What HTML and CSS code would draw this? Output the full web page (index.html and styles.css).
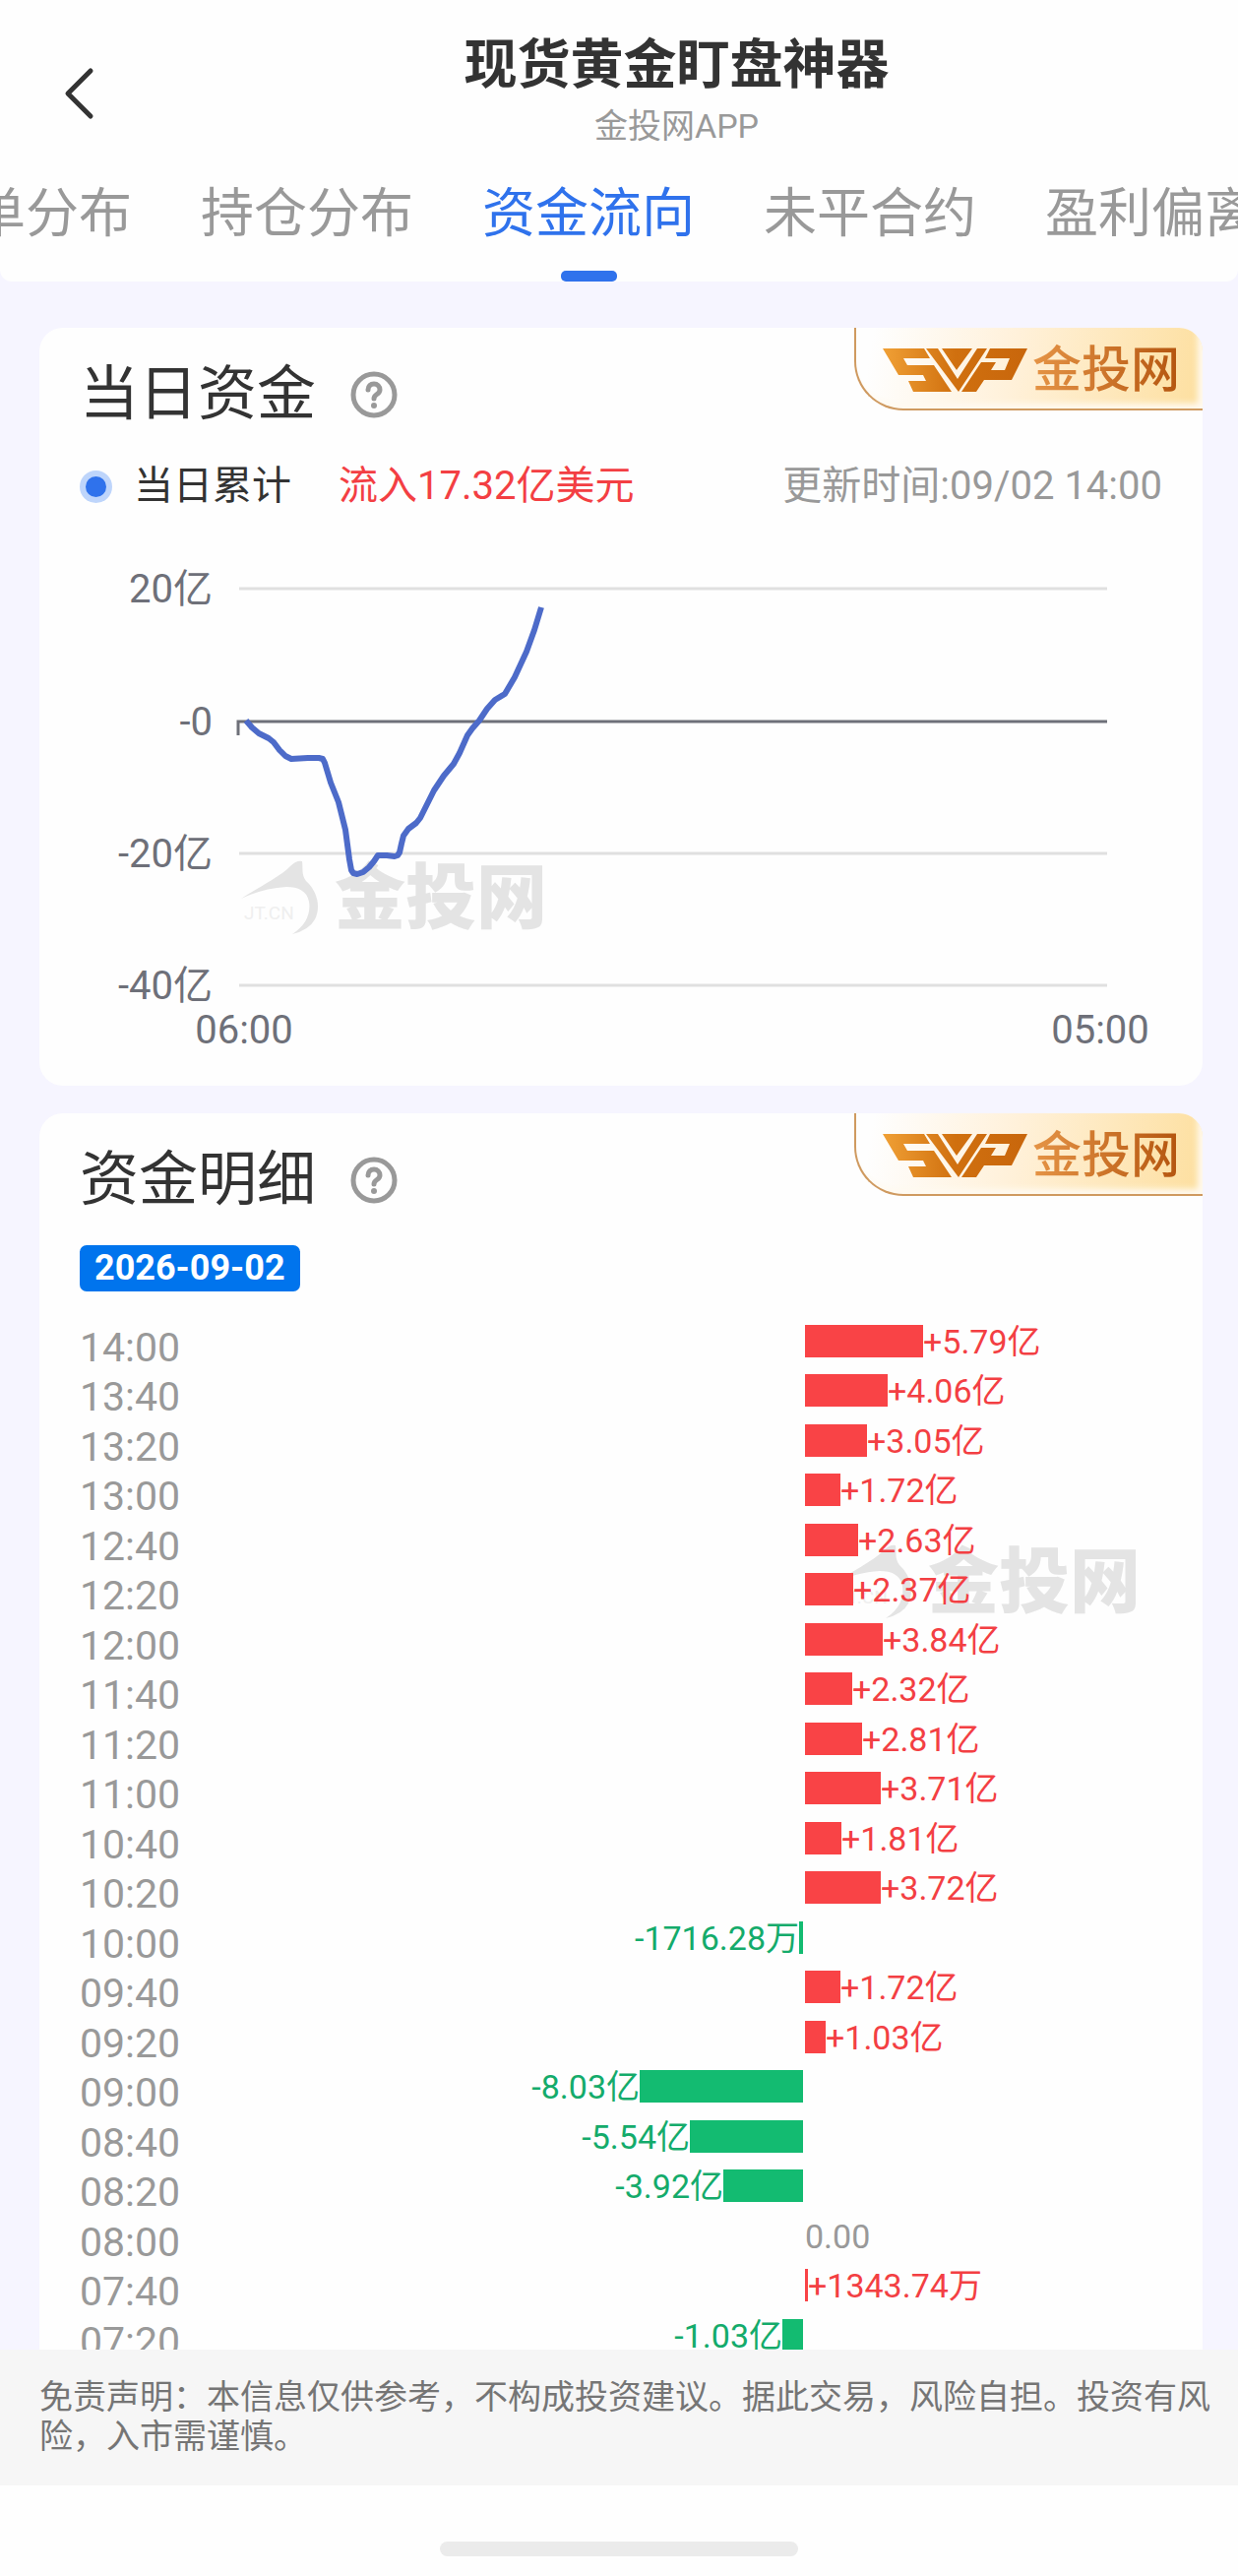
FILE: index.html
```
<!DOCTYPE html>
<html lang="zh-CN">
<head>
    <meta charset="UTF-8">
    <meta name="viewport" content="width=device-width, initial-scale=1">
    <title>现货黄金盯盘神器</title>
    <link rel="stylesheet" href="styles.css">
</head>
<body>
    <!-- Shared symbols -->
    <svg class="symbols" aria-hidden="true">
        <defs>
            <linearGradient id="goldLogo" x1="0" y1="0" x2="1" y2="0">
                <stop offset="0" stop-color="#f0a035"/>
                <stop offset="0.5" stop-color="#d0700f"/>
                <stop offset="1" stop-color="#c8660c"/>
            </linearGradient>
        </defs>
        <symbol id="help" viewBox="0 0 48 48">
            <circle cx="24" cy="24" r="21" fill="none" stroke="#999" stroke-width="5"/>
            <path d="M18 19c0-4 2.500-6 6-6s6 2.500 6 6c0 5-6 4-6 9" fill="none" stroke="#999" stroke-width="5" stroke-linecap="round"/>
            <circle cx="24" cy="35" r="3" fill="#999"/>
        </symbol>
        <symbol id="svp" viewBox="0 0 147 44">
            <path fill="url(#goldLogo)" d="M0 0H42L48 10H21L25 17H52L70 44H31L26 33H44L41 27H16ZM44 0H56L76 31L96 0H106L77 44ZM60 0H91L75 22ZM109 0H147L131 32H103L95 44H80L100 14H115L110 22H124L129 10H104Z"/>
        </symbol>
        <symbol id="watermark" viewBox="0 0 308 76">
            <path fill="#e4e4e4" d="M0 39C16 28 38 18 50 6Q56 0 62 1C63 8 61 14 66 21C78 32 81 48 75 60Q69 71 52 75C66 66 71 54 69 42C67 31 58 27 46 27C30 28 14 32 0 39Z"/>
            <text class="mark-small" x="3" y="60">JT.CN</text>
            <text class="mark-name" x="95" y="63">金投网</text>
        </symbol>
    </svg>

    <header class="top">
        <div class="title-bar">
            <button class="back" type="button" aria-label="返回">
                <svg width="32" height="54" viewBox="0 0 32 54"><path d="M28 4L5 27L28 50" fill="none" stroke="#333" stroke-width="5" stroke-linecap="round" stroke-linejoin="round"/></svg>
            </button>
            <div class="titles">
                <h1>现货黄金盯盘神器</h1>
                <p>金投网APP</p>
            </div>
        </div>
        <nav class="tabs">
            <a href="#orders">挂单分布</a>
            <a href="#positions">持仓分布</a>
            <a href="#flow" class="active">资金流向</a>
            <a href="#open">未平合约</a>
            <a href="#profit">盈利偏离</a>
        </nav>
    </header>

    <main class="content">
        <section class="card">
            <div class="brand">
                <svg class="brand-logo"><use href="#svp"/></svg>
                <span>金投网</span>
            </div>
            <div class="card-head">
                <h2>当日资金</h2>
                <button class="help" type="button" aria-label="说明"><svg><use href="#help"/></svg></button>
            </div>
            <div class="summary">
                <i class="dot"></i>
                <span class="summary-name">当日累计</span>
                <span class="summary-value">流入17.32亿美元</span>
                <time class="updated">更新时间:09/02 14:00</time>
            </div>
            <svg class="chart" viewBox="0 0 1182 543">
                <use href="#watermark" x="205" y="314" width="308" height="76"/>
                <g class="grid">
                    <path d="M203 38H1085M203 307H1085M203 441H1085"/>
                </g>
                <path class="axis" d="M202 187V173H1085"/>
                <g class="y-labels">
                    <text x="176" y="52">20亿</text>
                    <text x="176" y="187">-0</text>
                    <text x="176" y="321">-20亿</text>
                    <text x="176" y="455">-40亿</text>
                </g>
                <g class="x-labels">
                    <text x="208" y="500">06:00</text>
                    <text x="1078" y="500">05:00</text>
                </g>
                <polyline class="line" points="210,172 216,179 223,185 233,190 238,194 244,202 250,208 256,211 273,210 284,210 288,211 290,215 296,235 304,255 311,283 315,313 317,324 319,327 323,328 329,326 335,321 340,315 344,309 353,309 361,310 364,309 366,306 368,297 370,289 375,282 383,276 387,271 391,263 401,243 411,228 421,216 427,205 435,187 440,180 447,172 455,160 463,151 473,145 483,128 495,102 503,80 510,57"/>
            </svg>
        </section>

        <section class="card">
            <div class="brand">
                <svg class="brand-logo"><use href="#svp"/></svg>
                <span>金投网</span>
            </div>
            <div class="card-head">
                <h2>资金明细</h2>
                <button class="help" type="button" aria-label="说明"><svg><use href="#help"/></svg></button>
            </div>
            <time class="date">2026-09-02</time>
            <svg class="watermark"><use href="#watermark"/></svg>
            <ul class="flows" id="flows"></ul>
        </section>
    </main>

    <footer class="disclaimer">
        <p>免责声明：本信息仅供参考，不构成投资建议。据此交易，风险自担。投资有风险，入市需谨慎。</p>
    </footer>
    <div class="home"><i></i></div>

    <script>
        // [time, amount in 亿, label]
        const flows = [
            ['14:00', 5.79, '+5.79亿'],
            ['13:40', 4.06, '+4.06亿'],
            ['13:20', 3.05, '+3.05亿'],
            ['13:00', 1.72, '+1.72亿'],
            ['12:40', 2.63, '+2.63亿'],
            ['12:20', 2.37, '+2.37亿'],
            ['12:00', 3.84, '+3.84亿'],
            ['11:40', 2.32, '+2.32亿'],
            ['11:20', 2.81, '+2.81亿'],
            ['11:00', 3.71, '+3.71亿'],
            ['10:40', 1.81, '+1.81亿'],
            ['10:20', 3.72, '+3.72亿'],
            ['10:00', -0.171628, '-1716.28万'],
            ['09:40', 1.72, '+1.72亿'],
            ['09:20', 1.03, '+1.03亿'],
            ['09:00', -8.03, '-8.03亿'],
            ['08:40', -5.54, '-5.54亿'],
            ['08:20', -3.92, '-3.92亿'],
            ['08:00', 0, '0.00'],
            ['07:40', 0.134374, '+1343.74万'],
            ['07:20', -1.03, '-1.03亿']
        ];
        const pxPerYi = 20.7;

        document.getElementById('flows').innerHTML = flows.map(([time, amount, label]) => {
            const side = amount > 0 ? 'in' : amount < 0 ? 'out' : 'none';
            const width = Math.round(Math.abs(amount) * pxPerYi);
            return `
                <li>
                    <time>${time}</time>
                    <div class="flow ${side}">
                        <i class="bar" style="width: ${width}px"></i>
                        <span>${label}</span>
                    </div>
                </li>
            `;
        }).join('');
    </script>
</body>
</html>
```
FILE: styles.css
```
/* Basic Reset & Body */
* {
    box-sizing: border-box;
    margin: 0;
    padding: 0;
}

body {
    display: flex;
    flex-direction: column;
    height: 100vh;
    overflow: hidden;
    background: #f6f5ff;
    color: #333;
    font-family: Roboto, "Noto Sans CJK SC", sans-serif;
}

button {
    border: none;
    background: none;
    cursor: pointer;
}

a {
    color: inherit;
    text-decoration: none;
}

svg {
    display: block;
}

.symbols {
    position: absolute;
    width: 0;
    height: 0;
}

/* Header */
.top {
    flex: none;
    background: #fefefe;
    border-radius: 0 0 12px 12px;
    overflow: hidden;
}

.title-bar {
    display: flex;
    padding-top: 37px;
}

.back {
    width: 117px;
    height: 116px;
    padding-left: 64px;
}

.titles {
    flex: 1;
    text-align: center;
}

.titles h1 {
    font-size: 54px;
    line-height: 60px;
    font-weight: 700;
}

.titles p {
    margin-top: 11px;
    font-size: 34px;
    line-height: 40px;
    color: #999;
}

/* Tabs */
.tabs {
    display: flex;
    gap: 70px;
    margin-left: -82px;
    padding-top: 31px;
}

.tabs a {
    flex: none;
    display: flex;
    flex-direction: column;
    align-items: center;
    height: 102px;
    font-size: 54px;
    line-height: 68px;
    color: #999;
}

.tabs .active {
    color: #2f72ec;
}

.tabs .active::after {
    content: "";
    width: 57px;
    height: 11px;
    margin-top: auto;
    border-radius: 5px;
    background: #2f72ec;
}

/* Cards */
.content {
    flex: 1;
    min-height: 0;
    overflow: hidden;
    padding: 47px 36px 0 40px;
}

.card {
    position: relative;
    margin-bottom: 28px;
    background: #fefefe;
    border-radius: 24px;
    overflow: hidden;
}

.card:last-child {
    padding-bottom: 40px;
}

.card-head {
    display: flex;
    align-items: center;
    gap: 35px;
    padding: 32px 41px 0;
}

.card-head h2 {
    font-size: 60px;
    line-height: 72px;
    font-weight: 400;
}

.help svg {
    width: 48px;
    height: 48px;
}

/* Corner brand */
.brand {
    position: absolute;
    top: 0;
    right: 0;
    display: flex;
    align-items: center;
    gap: 5px;
    width: 354px;
    height: 84px;
    padding: 4px 0 0 27px;
    border-left: 2px solid #cf9a60;
    border-bottom: 2px solid #cf9a60;
    border-bottom-left-radius: 50px;
    background: linear-gradient(100deg, #fefefe 5%, #fff1da 45%, #fddf9f 100%);
    box-shadow: inset -5px -5px 6px #fffaf0;
}

.brand-logo {
    width: 147px;
    height: 44px;
}

.brand span {
    font-size: 50px;
    line-height: 60px;
    font-weight: 500;
    color: transparent;
    background: linear-gradient(90deg, #e59446, #b4550f);
    background-clip: text;
}

/* Daily summary */
.summary {
    display: flex;
    align-items: center;
    margin-top: 33px;
    padding: 0 41px;
    font-size: 40px;
    line-height: 48px;
}

.dot {
    width: 33px;
    height: 33px;
    border: 6px solid #bed5fb;
    border-radius: 50%;
    background: #2f72ec;
}

.summary-name {
    margin-left: 22px;
}

.summary-value {
    margin-left: 48px;
    color: #f33f43;
}

.updated {
    margin-left: auto;
    color: #999;
}

/* Line chart */
.chart {
    width: 100%;
    margin-top: 42px;
    font-size: 40px;
}

.chart text {
    fill: #6e7079;
}

.grid {
    stroke: #e0e0e0;
    stroke-width: 3;
}

.axis {
    fill: none;
    stroke: #6e7079;
    stroke-width: 3;
}

.y-labels {
    text-anchor: end;
}

.x-labels {
    text-anchor: middle;
}

.line {
    fill: none;
    stroke: #4d6bc9;
    stroke-width: 6;
    stroke-linejoin: round;
}

text.mark-small {
    font-size: 19px;
    fill: #efefef;
}

text.mark-name {
    font-size: 72px;
    font-weight: 900;
    fill: #e4e4e4;
}

.watermark {
    position: absolute;
    top: 438px;
    right: 66px;
    width: 308px;
    height: 76px;
}

/* Flow list */
.date {
    display: block;
    width: fit-content;
    margin: 30px 41px 0;
    padding: 0 15px;
    border-radius: 7px;
    background: #0074ed;
    color: #fff;
    font-size: 36px;
    line-height: 47px;
    font-weight: 700;
}

.flows {
    position: relative;
    margin-top: 19px;
    padding: 0 41px;
    list-style: none;
}

.flows li {
    display: grid;
    grid-template-columns: 120px 22fr 13fr;
    height: 50px;
}

.flows li:nth-child(even) {
    margin-bottom: 1px;
}

.flows time {
    padding-top: 13px;
    font-size: 41px;
    line-height: 50px;
    color: #999;
}

.flow {
    display: flex;
    align-items: center;
    grid-column: 3;
    padding-left: 1px;
    font-size: 34px;
    line-height: 40px;
    white-space: nowrap;
}

.bar {
    flex: none;
    height: 33px;
}

.in {
    color: #f33f43;
}

.in .bar {
    background: #f94346;
}

.out {
    grid-column: 2;
    flex-direction: row-reverse;
    padding: 0 1px 0 0;
    color: #14ab6b;
}

.out .bar {
    background: #13bb71;
}

.none {
    color: #999;
}

/* Footer */
.disclaimer {
    flex: none;
    padding: 28px 24px 30px 40px;
    background: #f6f6f6;
    color: #757575;
    font-size: 34px;
    line-height: 40px;
}

.home {
    flex: none;
    display: flex;
    justify-content: center;
    height: 92px;
    padding-top: 57px;
    background: #fefefe;
}

.home i {
    width: 364px;
    height: 15px;
    border-radius: 8px;
    background: #ebebeb;
}
```
